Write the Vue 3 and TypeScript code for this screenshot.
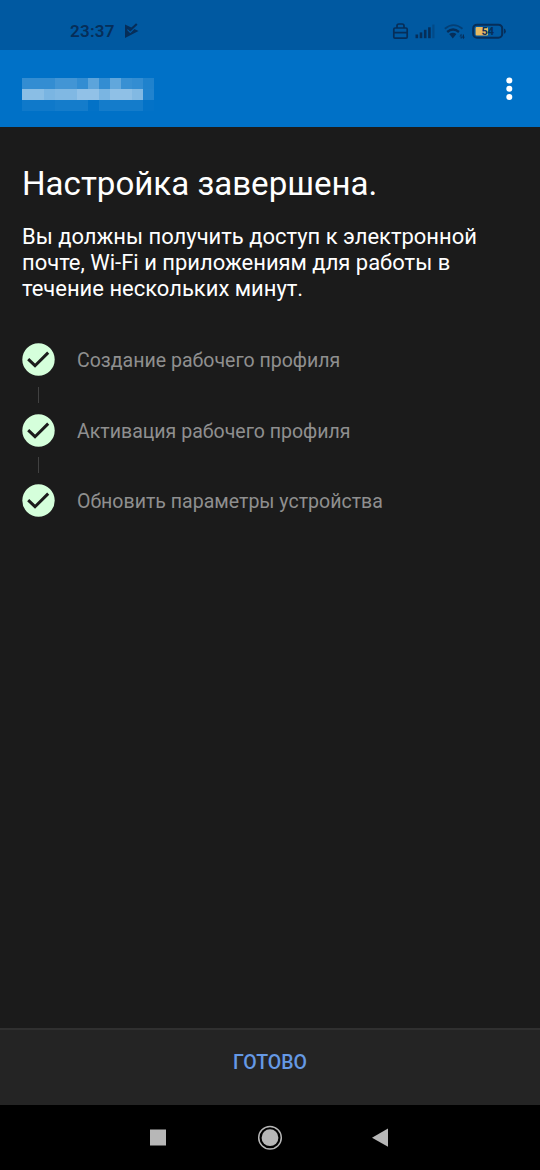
<script setup lang="ts">
const steps: string[] = [
  'Создание рабочего профиля',
  'Активация рабочего профиля',
  'Обновить параметры устройства',
]

// Opacity of every tile of the obscured account name, row by row.
const tiles: number[] = [
  0.2, 0.2, 0.2, 0.26, 0.26, 0.2, 0.36, 0.2, 0.38, 0.22, 0.2, 0.12,
  0.54, 0.54, 0.48, 0.5, 0.5, 0.57, 0.57, 0.48, 0.56, 0.56, 0.51, 0.13,
  0.06, 0.06, 0.06, 0.08, 0.08, 0.08, 0.01, 0.08, 0.08, 0.08, 0.08, 0.01,
]
</script>

<template>
  <div class="screen">
    <header class="status">
      <span class="clock">23:37</span>
      <svg class="play" width="16" height="18" viewBox="0 0 16 18">
        <path d="M1 2.5 14.5 9 1 16Z" fill="#062e59" />
        <path d="M3.5 7.5 6.3 10.3 12 4.5" fill="none" stroke="#0059a3" stroke-width="1.3" />
        <path d="M4 5.4 6.3 8 12.8 2" fill="none" stroke="#062e59" stroke-width="2.2" />
      </svg>
      <svg class="signals" width="118" height="22" viewBox="390 20 118 22">
        <g fill="none" stroke="#062e59" stroke-width="1.7">
          <rect x="393.8" y="28" width="13.4" height="10.2" rx="1.2" />
          <path d="M397 28v-2.2q0-1.8 1.8-1.8h3.4q1.8 0 1.8 1.8V28M394 32.6h13" />
        </g>
        <g fill="#062e59">
          <rect x="415.5" y="34.5" width="2.6" height="3.7" />
          <rect x="419.7" y="32.4" width="2.6" height="5.8" />
          <rect x="423.9" y="29.8" width="2.6" height="8.4" />
          <rect x="428.1" y="27.3" width="2.6" height="10.9" />
          <rect x="432.3" y="24.6" width="2.2" height="13.6" opacity=".35" />
          <path d="M449.2 34.1 452.8 38.4 456.4 34.1Q452.8 31.3 449.2 34.1Z" />
          <path d="m459.4 36.4 1.7-2.6 1.4 2.6zM460.6 38.4h1.2v-3h-1.2zM461.9 36.7h2.9l-1.4 2.6zM462.8 34.4h1.2v3h-1.2z" />
        </g>
        <path d="M444.8 28.8Q453.5 21.5 462.5 28.8" fill="none" stroke="#062e59" stroke-width="1.8" opacity=".6" />
        <path d="M447.2 32Q453 27.2 459 32" fill="none" stroke="#062e59" stroke-width="2.4" />
        <rect x="473.2" y="24.7" width="29" height="13" rx="3.8" fill="none" stroke="#062e59" stroke-width="2.1" />
        <rect x="475.6" y="27" width="12.4" height="8.6" rx="1" fill="#e5ba62" />
        <path d="M504 28.6q1.8.5 1.8 2.6t-1.8 2.6z" fill="#062e59" />
        <text x="487.8" y="35.3" text-anchor="middle" class="charge">54</text>
      </svg>
    </header>

    <div class="toolbar">
      <div class="mosaic">
        <i v-for="(alpha, n) in tiles" :key="n" :style="{ opacity: alpha }"></i>
      </div>
      <svg class="more" width="8" height="24" viewBox="0 0 8 24" fill="#fff">
        <circle cx="4.3" cy="3.5" r="3" />
        <circle cx="4.3" cy="11.7" r="3" />
        <circle cx="4.3" cy="19.9" r="3" />
      </svg>
    </div>

    <main class="content">
      <h1>Настройка завершена.</h1>
      <p>Вы должны получить доступ к электронной<br />почте, Wi-Fi и приложениям для работы в<br />течение нескольких минут.</p>
      <ul>
        <li v-for="step in steps" :key="step">
          <svg width="33" height="33" viewBox="0 0 33 33">
            <circle cx="16.5" cy="16.5" r="16.2" fill="#d5ffdb" />
            <path d="M6.2 16.2 13 22.7 26.2 9.6" fill="none" stroke="#1b1b1b" stroke-width="3" />
          </svg>
          <span>{{ step }}</span>
        </li>
      </ul>
    </main>

    <footer class="actions"><button type="button">ГОТОВО</button></footer>

    <nav class="system">
      <svg width="540" height="65" viewBox="0 0 540 65" fill="#b7b7b7">
        <rect x="150" y="24.5" width="16" height="16" />
        <circle cx="270" cy="32.7" r="8.4" />
        <circle cx="270" cy="32.7" r="11.3" fill="none" stroke="#b7b7b7" stroke-width="1.5" />
        <path d="M372 32.7 388 23.6V41.8Z" />
      </svg>
    </nav>
  </div>
</template>

<style>
body {
  margin: 0;
  background: #1b1b1b;
}
</style>

<style scoped>
.screen {
  width: 540px;
  height: 1170px;
  display: flex;
  flex-direction: column;
  overflow: hidden;
  background: #1b1b1b;
  color: #fff;
  font-family: Roboto, "Noto Sans", sans-serif;
}
.status {
  height: 50px;
  flex: none;
  box-sizing: border-box;
  display: flex;
  padding: 20px 0 0 70px;
  background: #0059a1;
}
.clock {
  width: 54px;
  color: #062e59;
  font-size: 17px;
  font-weight: 600;
  line-height: 23px;
  letter-spacing: 0.25px;
}
.play {
  margin-top: 2px;
}
.signals {
  margin-left: auto;
  margin-right: 32px;
}
.charge {
  fill: #062e59;
  font-size: 11px;
  font-weight: 700;
}
.toolbar {
  height: 77px;
  flex: none;
  box-sizing: border-box;
  display: flex;
  justify-content: space-between;
  align-items: flex-start;
  padding: 28px 27px 0 22px;
  background: #0071c7;
}
.mosaic {
  display: grid;
  grid-template-columns: repeat(12, 11px);
  grid-auto-rows: 11px;
}
.mosaic i {
  background: #fff;
}
.more {
  margin-top: -1px;
}
.content {
  flex: 1;
  padding: 37px 22px 0;
}
h1 {
  margin: 0;
  font-size: 33.1px;
  font-weight: 400;
  line-height: 40px;
  white-space: nowrap;
}
p {
  margin: 20px 0 0;
  font-size: 21.98px;
  line-height: 26px;
  white-space: nowrap;
}
ul {
  margin: 41px 0 0;
  padding: 0;
  list-style: none;
}
li {
  display: grid;
  grid-template-columns: 33px 1fr;
  column-gap: 22px;
  align-items: center;
  color: #8f8f8f;
  font-size: 19.55px;
  line-height: 33px;
  white-space: nowrap;
}
li span {
  padding-top: 3px;
  line-height: 30px;
}
li + li {
  grid-template-rows: 37.5px 33px;
}
li + li::before {
  content: "";
  grid-column: 1 / -1;
  width: 1px;
  height: 16px;
  margin-left: 16px;
  background: #414141;
}
.actions {
  height: 77px;
  flex: none;
  box-sizing: border-box;
  border-top: 2px solid #303030;
  background: #242424;
  display: flex;
  justify-content: center;
  align-items: flex-start;
}
button {
  margin: 20px 0 0;
  padding: 0;
  border: 0;
  background: none;
  color: #6599e5;
  font: 500 19.5px/26px Roboto, "Noto Sans", sans-serif;
}
.system {
  height: 65px;
  flex: none;
  background: #000;
}
.system svg {
  display: block;
}
</style>
